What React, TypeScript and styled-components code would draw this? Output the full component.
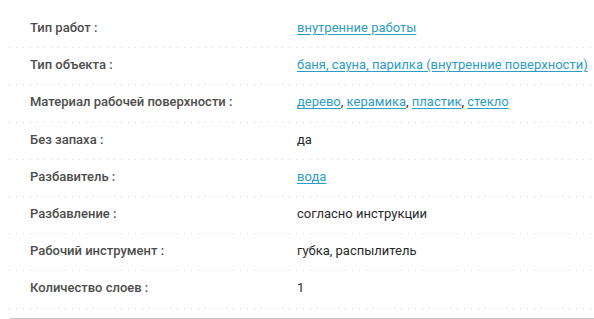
import React from 'react'
import styled, { createGlobalStyle } from 'styled-components'

const GlobalStyle = createGlobalStyle`
  html, body {
    margin: 0;
    padding: 0;
    background: #ffffff;
  }
  body {
    font-family: Roboto, "Liberation Sans", Arial, sans-serif;
    -webkit-font-smoothing: antialiased;
  }
`

const Specs = styled.div`
  padding: 11px 0 0 8px;
`

const SpecRow = styled.div`
  display: grid;
  grid-template-columns: 289px 1fr;
  align-items: start;
  height: 37.2px;
  box-sizing: border-box;
  padding-top: 8px;
  background-image: linear-gradient(to right, #d6d6d6 1px, transparent 1px);
  background-size: 7px 1px;
  background-repeat: repeat-x;
  background-position: 1px bottom;
`

const Label = styled.div`
  padding-left: 22px;
  font-size: 13px;
  line-height: 18px;
  font-weight: 500;
  color: #4d4d4d;
`

const Value = styled.div`
  font-size: 13px;
  line-height: 18px;
  color: #2a2a2a;
  white-space: nowrap;
`

const Link = styled.a`
  color: #2d9dc4;
  text-decoration: underline;
  text-underline-offset: 2px;
  cursor: pointer;
`

const BottomRule = styled.div`
  margin-top: 9px;
  margin-left: 2px;
  height: 2px;
  background: #c8c8c8;
`

type Spec = {
  label: string
  value: string[]
  linked?: boolean
}

const specs: Spec[] = [
  { label: 'Тип работ :', value: ['внутренние работы'], linked: true },
  { label: 'Тип объекта :', value: ['баня, сауна, парилка (внутренние поверхности)'], linked: true },
  { label: 'Материал рабочей поверхности :', value: ['дерево', 'керамика', 'пластик', 'стекло'], linked: true },
  { label: 'Без запаха :', value: ['да'] },
  { label: 'Разбавитель :', value: ['вода'], linked: true },
  { label: 'Разбавление :', value: ['согласно инструкции'] },
  { label: 'Рабочий инструмент :', value: ['губка, распылитель'] },
  { label: 'Количество слоев :', value: ['1'] },
]

export default function App() {
  return (
    <>
      <GlobalStyle />
      <Specs>
        {specs.map((spec) => (
          <SpecRow key={spec.label}>
            <Label>{spec.label}</Label>
            <Value>
              {spec.linked
                ? spec.value.map((v, i) => (
                    <React.Fragment key={v}>
                      {i > 0 && ', '}
                      <Link href="#">{v}</Link>
                    </React.Fragment>
                  ))
                : spec.value.join(', ')}
            </Value>
          </SpecRow>
        ))}
        <BottomRule />
      </Specs>
    </>
  )
}
